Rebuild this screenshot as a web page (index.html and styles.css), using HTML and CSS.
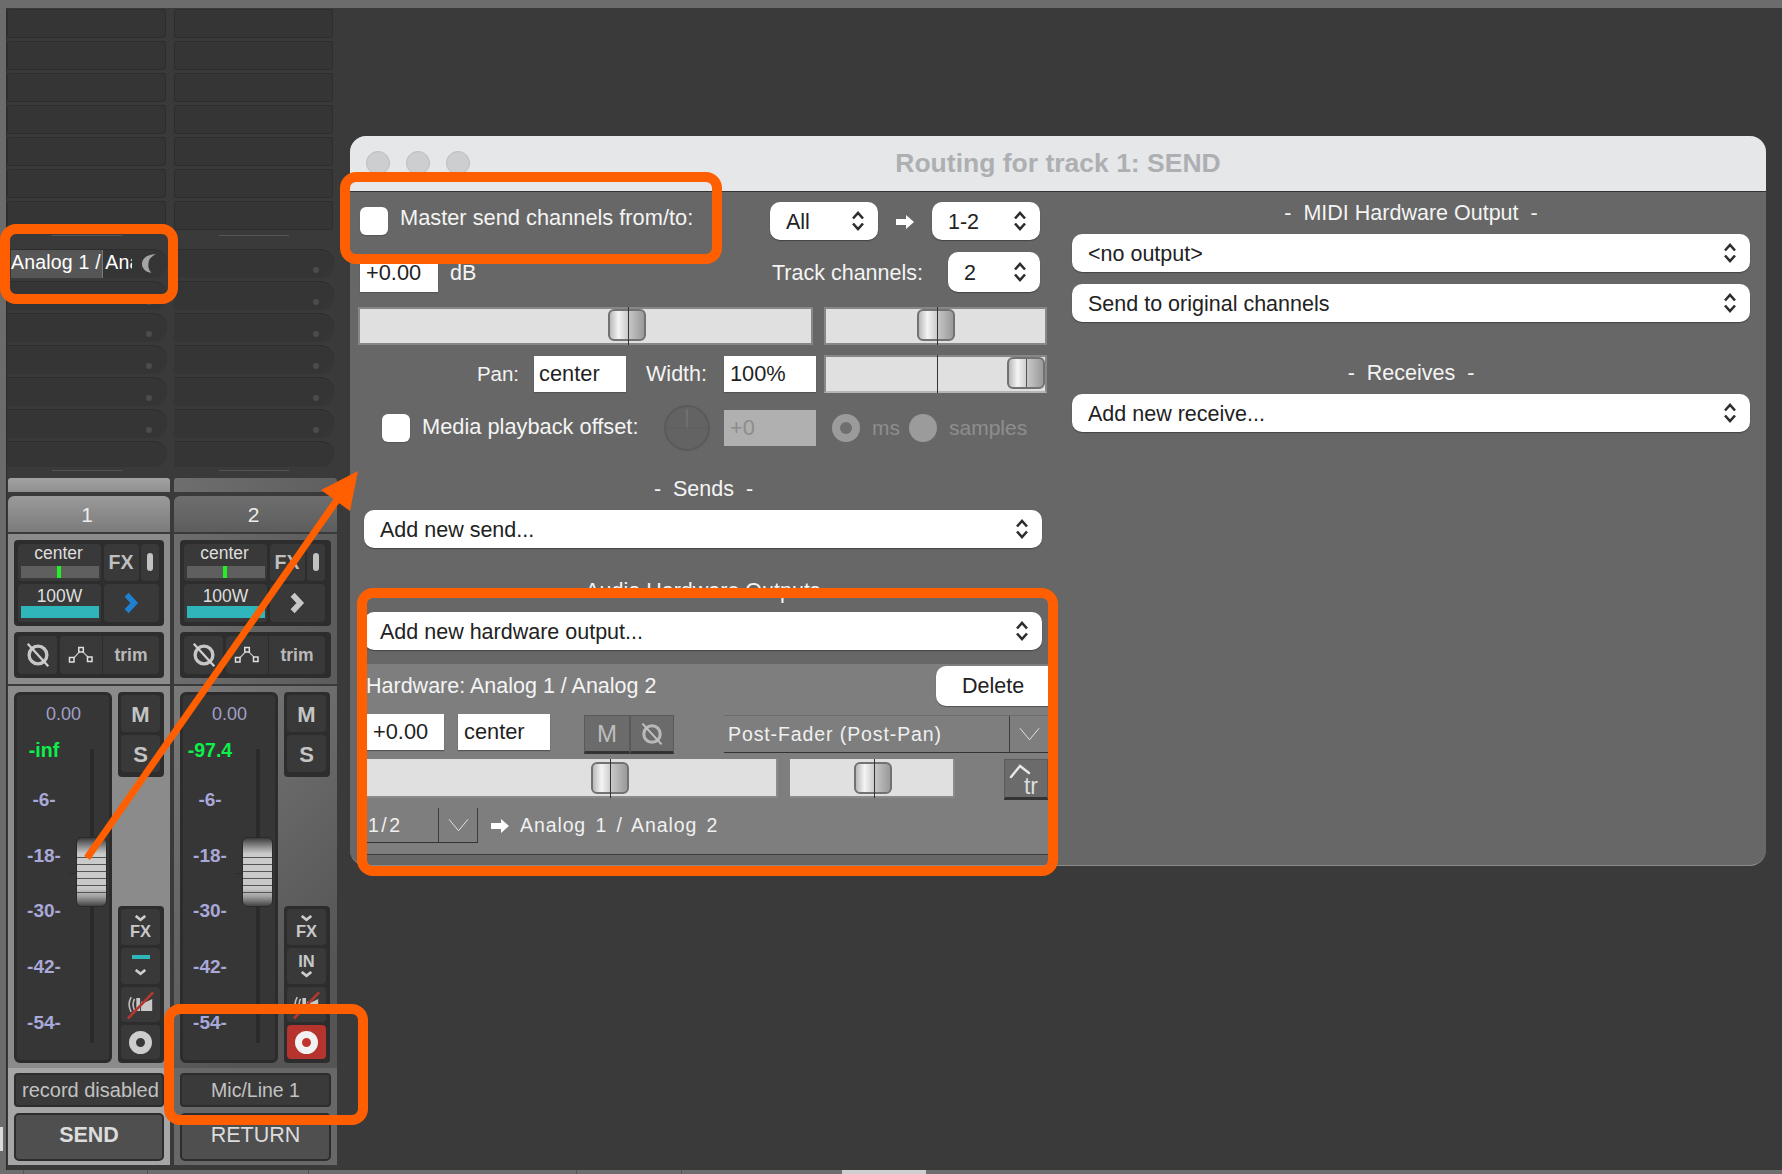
FILE: index.html
```html
<!DOCTYPE html>
<html lang="en">
<head>
<meta charset="utf-8">
<title>Routing for track 1: SEND</title>
<link rel="stylesheet" href="styles.css">
</head>
<body>
<svg class="defs" width="0" height="0">
  <symbol id="updown" viewBox="0 0 14 22"><path d="M2 8.500 7 3l5 5.500M2 13.500 7 19l5-5.500" fill="none" stroke="#2d2d2d" stroke-width="2.600"/></symbol>
  <symbol id="phase" viewBox="0 0 30 30"><circle cx="15" cy="15" r="9.500" fill="none" stroke="#c6c6c6" stroke-width="3.600"/><path d="M4 3 26 27" stroke="#d0d0d0" stroke-width="2.400"/></symbol>
  <symbol id="env" viewBox="0 0 26 20"><path d="M4 15 13 5l9 9" fill="none" stroke="#c4c4c4" stroke-width="1.200"/><path d="M1.500 12.500h4.500v4.500H1.500zM10.800 2.500h4.500V7h-4.500zM19.500 12h4.500v4.500h-4.500z" fill="#383838" stroke="#e0e0e0" stroke-width="1.500"/></symbol>
  <symbol id="chev" viewBox="0 0 14 20"><path d="M3 2.500 10 10l-7 7.500" fill="none" stroke="currentColor" stroke-width="5"/></symbol>
  <symbol id="down" viewBox="0 0 14 8"><path d="M1.500 1 7 5.500 12.500 1" fill="none" stroke="#ccc" stroke-width="3"/></symbol>
  <symbol id="speaker" viewBox="0 0 30 34"><path d="M10 10h4v14h-4zM15 14h6l6-3v13h-12z" fill="#c8c8c8"/><path d="M8 11q-3 6 0 12M4.500 9q-4.500 8 0 16" fill="none" stroke="#c0c0c0" stroke-width="1.700"/><path d="M1 32 28 4" stroke="#b3392f" stroke-width="2.800"/></symbol>
  <symbol id="arrowr" viewBox="0 0 18 14"><path d="M0 4h10V0l8 7-8 7v-4H0z" fill="#fff"/></symbol>
  <symbol id="vee" viewBox="0 0 22 14"><path d="M1 1l10 12L21 1" fill="none" stroke="#e6e6e6" stroke-width="1"/></symbol>
</svg>

<div class="screen">
  <div class="topbar"></div>
  <div class="main">
    <div class="edge"><div class="edge-tab"></div></div>

    <section class="track">
      <div class="clips">
        <div class="clip"></div><div class="clip"></div><div class="clip"></div><div class="clip"></div><div class="clip"></div><div class="clip"></div><div class="clip"></div>
        <div class="clip-sep"></div>
        <div class="slot slot-name">
          <span class="slot-label">Analog 1 / Analog 2</span>
          <svg class="crescent" viewBox="0 0 14 18"><path d="M13 1C4 1 0 6 1 11c1 4 5 6 8 6-2-2-3-5-2.500-8C7 5 9 3 13 1z" fill="#a4a4a4"/></svg>
        </div>
        <div class="slot"><i class="dot"></i></div><div class="slot"><i class="dot"></i></div><div class="slot"><i class="dot"></i></div><div class="slot"><i class="dot"></i></div><div class="slot"><i class="dot"></i></div><div class="slot slot-last"></div>
        <div class="clip-sep clip-sep-end"></div>
      </div>
      <div class="strip strip-selected">
        <div class="strip-bar"></div>
        <div class="strip-head">1</div>
        <div class="strip-top">
          <div class="panel panel-a">
            <div class="cell cell-meter"><span class="small">center</span><div class="pan-meter"><i></i></div></div>
            <div class="cell cell-text fx-large">FX</div>
            <div class="cell cell-pill"><i></i></div>
            <div class="cell cell-meter"><span class="small small-low">100W</span><div class="width-meter"></div></div>
            <div class="cell cell-wide chev-blue"><svg class="chev"><use href="#chev"/></svg></div>
          </div>
          <div class="panel panel-b">
            <div class="cell cell-phase"><svg class="phase"><use href="#phase"/></svg></div>
            <div class="cell cell-env"><span class="env-box"><svg class="env"><use href="#env"/></svg></span><span class="trim">trim</span></div>
          </div>
        </div>
        <div class="strip-fader">
          <div class="fader-panel">
            <div class="vol">0.00</div>
            <div class="peak">-inf</div>
            <div class="scale"><span>-6-</span><span>-18-</span><span>-30-</span><span>-42-</span><span>-54-</span></div>
            <div class="rail"></div>
            <div class="fader-tick"></div>
            <div class="fader-cap"></div>
          </div>
          <div class="side">
            <div class="panel panel-ms"><div class="cell cell-text ms">M</div><div class="cell cell-text ms">S</div></div>
            <div class="panel panel-tools">
              <div class="cell cell-tool tool-fx"><svg class="down"><use href="#down"/></svg><b>FX</b></div>
              <div class="cell cell-tool tool-in"><i class="teal-dash"></i><svg class="down"><use href="#down"/></svg></div>
              <div class="cell cell-tool tool-sp"><svg class="speaker"><use href="#speaker"/></svg></div>
              <div class="cell cell-tool tool-rec"><i class="rec"></i></div>
            </div>
          </div>
        </div>
        <div class="strip-foot">
          <div class="input-label">record disabled</div>
          <div class="name-btn name-bold">SEND</div>
        </div>
      </div>
    </section>

    <section class="track">
      <div class="clips">
        <div class="clip"></div><div class="clip"></div><div class="clip"></div><div class="clip"></div><div class="clip"></div><div class="clip"></div><div class="clip"></div>
        <div class="clip-sep"></div>
        <div class="slot"><i class="dot"></i></div><div class="slot"><i class="dot"></i></div><div class="slot"><i class="dot"></i></div><div class="slot"><i class="dot"></i></div><div class="slot"><i class="dot"></i></div><div class="slot"><i class="dot"></i></div><div class="slot slot-last"></div>
        <div class="clip-sep clip-sep-end"></div>
      </div>
      <div class="strip strip-plain">
        <div class="strip-bar"></div>
        <div class="strip-head">2</div>
        <div class="strip-top">
          <div class="panel panel-a">
            <div class="cell cell-meter"><span class="small">center</span><div class="pan-meter"><i></i></div></div>
            <div class="cell cell-text fx-large">FX</div>
            <div class="cell cell-pill"><i></i></div>
            <div class="cell cell-meter"><span class="small small-low">100W</span><div class="width-meter"></div></div>
            <div class="cell cell-wide chev-grey"><svg class="chev"><use href="#chev"/></svg></div>
          </div>
          <div class="panel panel-b">
            <div class="cell cell-phase"><svg class="phase"><use href="#phase"/></svg></div>
            <div class="cell cell-env"><span class="env-box"><svg class="env"><use href="#env"/></svg></span><span class="trim">trim</span></div>
          </div>
        </div>
        <div class="strip-fader">
          <div class="fader-panel">
            <div class="vol">0.00</div>
            <div class="peak">-97.4</div>
            <div class="scale"><span>-6-</span><span>-18-</span><span>-30-</span><span>-42-</span><span>-54-</span></div>
            <div class="rail"></div>
            <div class="fader-tick"></div>
            <div class="fader-cap"></div>
          </div>
          <div class="side">
            <div class="panel panel-ms"><div class="cell cell-text ms">M</div><div class="cell cell-text ms">S</div></div>
            <div class="panel panel-tools">
              <div class="cell cell-tool tool-fx"><svg class="down"><use href="#down"/></svg><b>FX</b></div>
              <div class="cell cell-tool tool-in"><b>IN</b><svg class="down"><use href="#down"/></svg></div>
              <div class="cell cell-tool tool-sp"><svg class="speaker"><use href="#speaker"/></svg></div>
              <div class="cell cell-tool tool-rec tool-rec-on"><i class="rec"></i></div>
            </div>
          </div>
        </div>
        <div class="strip-foot">
          <div class="input-label">Mic/Line 1</div>
          <div class="name-btn">RETURN</div>
        </div>
      </div>
    </section>
  </div>
  <div class="bottombar">
    <span class="seg seg-1"></span><span class="seg seg-2"></span><span class="seg seg-3"></span><span class="seg seg-4"></span><span class="seg seg-5"></span><span class="seg seg-6"></span><span class="seg seg-7"></span>
  </div>
</div>

<div class="window">
  <header class="titlebar">
    <div class="lights"><i></i><i></i><i></i></div>
    <div class="title">Routing for track 1: SEND</div>
  </header>
  <div class="win-body">
    <div class="lcol">
      <div class="row row-1">
        <span class="check"></span>
        <span class="lbl lbl-master">Master send channels from/to:</span>
        <div class="sel sel-short"><span>All</span><svg class="updown"><use href="#updown"/></svg></div>
        <svg class="arrowr arrowr-1"><use href="#arrowr"/></svg>
        <div class="sel sel-short"><span>1-2</span><svg class="updown"><use href="#updown"/></svg></div>
      </div>
      <div class="row row-2">
        <div class="field field-db">+0.00</div>
        <span class="lbl lbl-db">dB</span>
        <span class="lbl lbl-track">Track channels:</span>
        <div class="sel sel-track"><span>2</span><svg class="updown"><use href="#updown"/></svg></div>
      </div>
      <div class="row row-3">
        <div class="slider slider-vol"><i class="tick"></i><i class="thumb"></i></div>
        <div class="slider slider-pan"><i class="tick"></i><i class="thumb"></i></div>
      </div>
      <div class="row row-4">
        <span class="lbl lbl-pan">Pan:</span>
        <div class="field field-pan">center</div>
        <span class="lbl lbl-width">Width:</span>
        <div class="field field-width">100%</div>
        <div class="slider slider-width"><i class="tick"></i><i class="thumb"></i></div>
      </div>
      <div class="row row-5">
        <span class="check"></span>
        <span class="lbl lbl-media">Media playback offset:</span>
        <svg class="knob" viewBox="0 0 46 46"><circle cx="23" cy="23" r="22" fill="#636363" stroke="#5a5a5a" stroke-width="2"/><path d="M23 4v19" stroke="#7d7d7d" stroke-width="1"/><path d="M2 23h42" stroke="#5e5e5e" stroke-width="1"/></svg>
        <div class="field field-off">+0</div>
        <span class="radio radio-on"></span>
        <span class="off-lbl off-ms">ms</span>
        <span class="radio radio-off"></span>
        <span class="off-lbl off-samples">samples</span>
      </div>
      <div class="section-title title-sends">-&nbsp; Sends &nbsp;-</div>
      <div class="sel sel-wide sel-send"><span>Add new send...</span><svg class="updown"><use href="#updown"/></svg></div>
      <div class="section-title title-audio">-&nbsp; Audio Hardware Outputs &nbsp;-</div>
      <div class="sel sel-wide sel-hw"><span>Add new hardware output...</span><svg class="updown"><use href="#updown"/></svg></div>
      <div class="hw-panel">
        <div class="hw-row hw-a">
          <span class="lbl hw-name">Hardware: Analog 1 / Analog 2</span>
          <button class="delete">Delete</button>
        </div>
        <div class="hw-row hw-b">
          <div class="field field-hw1">+0.00</div>
          <div class="field field-hw2">center</div>
          <div class="tbtn tbtn-m">M</div>
          <div class="tbtn tbtn-p"><svg class="phase-sm"><use href="#phase"/></svg></div>
          <div class="combo combo-mode"><span class="spaced">Post-Fader (Post-Pan)</span><span class="combo-end"><svg class="vee"><use href="#vee"/></svg></span></div>
        </div>
        <div class="hw-row hw-c">
          <div class="slider slider-hw1"><i class="tick"></i><i class="thumb"></i></div>
          <div class="slider slider-hw2"><i class="tick"></i><i class="thumb"></i></div>
          <div class="tbtn tbtn-tr"><svg class="tr-caret" viewBox="0 0 24 16"><path d="M3 14 12 3l9 7" fill="none" stroke="#e8e8e8" stroke-width="2.400" stroke-linecap="round"/></svg><span class="tr-text">tr</span></div>
        </div>
        <div class="hw-row hw-d">
          <div class="combo combo-ch"><span class="spaced spaced-ch">1/2</span><span class="combo-end"><svg class="vee"><use href="#vee"/></svg></span></div>
          <svg class="arrowr arrowr-2"><use href="#arrowr"/></svg>
          <span class="spaced hw-dest">Analog 1 / Analog 2</span>
        </div>
      </div>
    </div>
    <div class="rcol">
      <div class="section-title title-midi">-&nbsp; MIDI Hardware Output &nbsp;-</div>
      <div class="sel sel-wide sel-r1"><span>&lt;no output&gt;</span><svg class="updown"><use href="#updown"/></svg></div>
      <div class="sel sel-wide sel-r2"><span>Send to original channels</span><svg class="updown"><use href="#updown"/></svg></div>
      <div class="section-title title-recv">-&nbsp; Receives &nbsp;-</div>
      <div class="sel sel-wide sel-r1"><span>Add new receive...</span><svg class="updown"><use href="#updown"/></svg></div>
    </div>
  </div>
</div>

<div class="mark mark-slot"></div>
<div class="mark mark-master"></div>
<div class="mark mark-hw"></div>
<div class="mark mark-input"></div>
<svg class="arrow" viewBox="0 0 1782 1174"><path d="M87 858 337 500" stroke="#ff5f00" stroke-width="7" fill="none"/><path d="M358 471 321 490 350 511z" fill="#ff5f00"/></svg>
</body>
</html>
```

FILE: styles.css
```css
* { box-sizing: border-box; }
html, body { margin: 0; padding: 0; }
body {
  width: 1782px;
  height: 1174px;
  position: relative;
  overflow: hidden;
  background: #363636;
  font-family: "Liberation Sans", Arial, sans-serif;
  color: #f2f2f2;
}
.defs { position: absolute; }
i { display: block; font-style: normal; }

/* desktop frame */
.screen { display: flex; flex-direction: column; height: 1174px; }
.topbar { height: 8px; background: #6c6c6c; flex: none; }
.main { display: flex; height: 1162px; flex: none; background: #3a3a3a; }
.edge { width: 7px; background: linear-gradient(90deg, #6b6b6b 6px, #2c2c2c 6px); flex: none; padding-top: 1119px; }
.edge-tab { width: 3px; height: 24px; background: #dcdcdc; }
.bottombar { height: 4px; flex: none; background: #6e6e6e; display: flex; }
.seg { display: block; height: 4px; border-right: 1px solid #555; }
.seg-1 { width: 24px; }
.seg-2 { width: 124px; }
.seg-3 { width: 161px; }
.seg-4 { width: 268px; }
.seg-5 { width: 105px; }
.seg-6 { width: 160px; background: #6e6e6e; border-right: 0; }
.seg-7 { width: 84px; background: #cfcfcf; border-right: 0; }

/* track columns */
.track { width: 167px; flex: none; display: flex; flex-direction: column; }
.clips { height: 470px; overflow: hidden; padding-top: 1px; width: 160px; }
.clip {
  height: 29px; margin-bottom: 3px; width: 159px;
  background: #353535; border: 1px solid #2d2d2d; border-radius: 2px;
}
.clip-sep { height: 1px; width: 70px; margin: 5px 0 0 45px; background: #555; }
.clip-sep + .slot { margin-top: 13px; }
.clip-sep-end { margin-top: 3px; }
.slot {
  height: 29px; margin-bottom: 3px; width: 160px;
  background: #353535; border-radius: 0 14px 14px 0;
  border-top: 1px solid #2d2d2d;
  display: flex; justify-content: flex-end; align-items: flex-end;
  padding: 0 15px 5px 0;
}
.slot-last { height: 26px; margin-bottom: 0; }
.slot-name { position: relative; padding: 0; align-items: flex-start; justify-content: flex-start; }
.slot-label {
  margin-left: 4px; width: 121px; height: 28px; overflow: hidden; white-space: nowrap;
  font-size: 19.500px; line-height: 25px; letter-spacing: .2px; color: #fff;
  background: linear-gradient(90deg, #565656 91px, #777 91px, #777 92px, transparent 92px);
}
.crescent { width: 16px; height: 21px; margin: 3px 0 0 9px; }
.dot { width: 6px; height: 6px; border-radius: 50%; background: #4c4c4c; }

.strip { display: flex; flex-direction: column; height: 687px; margin-right: 4px; }
.track:first-of-type .strip { margin-left: 1px; }
.strip-bar { height: 14px; margin-bottom: 4px; border-radius: 3px 3px 0 0; }
.strip-head {
  height: 36px; border-radius: 6px 6px 0 0; margin-bottom: 2px; padding-right: 4px;
  text-align: center; font-size: 21px; line-height: 37px; color: #ececec;
}
.strip-selected .strip-bar { background: linear-gradient(180deg, #a2a2a2, #909090); }
.strip-selected .strip-head { background: linear-gradient(180deg, #9a9a9a, #7b7b7b); }
.strip-plain .strip-bar { background: linear-gradient(90deg, #6e6e6e, #5f5f5f); }
.strip-plain .strip-head { background: linear-gradient(180deg, #6e6e6e, #5d5d5d); }
.strip-top { height: 150px; padding: 6px; display: flex; flex-direction: column; gap: 6px; margin-bottom: 2px; }
.strip-selected .strip-top, .strip-selected .strip-fader { background: #8b8b8b; }
.strip-plain .strip-top { background: linear-gradient(90deg, #6d6d6d, #5c5c5c); }
.strip-plain .strip-fader { background: linear-gradient(135deg, #7a7a7a, #555 80%); }

.panel { background: #2d2d2d; border-radius: 4px; }
.cell { background: #393939; border-radius: 4px; }
.panel-a {
  height: 86px; padding: 4px 5px 4px 4px;
  display: grid; grid-template-columns: 83px 35px 18px; grid-template-rows: 37px 38px;
  column-gap: 2.500px; row-gap: 3px;
}
.cell-meter { display: flex; flex-direction: column; align-items: center; }
.small { font-size: 17.500px; line-height: 18px; color: #dedede; height: 22px; margin-right: 2px; }
.small-low { line-height: 24px; margin-right: 0; }
.pan-meter { width: 78px; height: 12px; background: #5f5f5f; position: relative; display: flex; justify-content: center; }
.pan-meter i { width: 4px; height: 12px; background: #22f022; margin-right: 1px; }
.width-meter { width: 78px; height: 12px; background: #2fb6bb; }
.cell-text { display: flex; align-items: center; justify-content: center; font-weight: 700; color: #bfbfbf; }
.fx-large { font-size: 19.500px; }
.cell-pill { display: flex; justify-content: center; padding-top: 9px; }
.cell-pill i { width: 6px; height: 18px; border-radius: 3px; background: #c2c2c2; }
.cell-wide { grid-column: span 2; display: flex; align-items: center; justify-content: center; }
.chev { width: 16px; height: 22px; }
.chev-blue { color: #2080d0; }
.chev-grey { color: #c8c8c8; }
.panel-b { height: 46px; padding: 4px 5px 4px 4px; display: flex; gap: 3px; }
.cell-phase { width: 39px; display: flex; align-items: center; justify-content: center; }
.phase { width: 28px; height: 28px; }
.cell-env { width: 99px; display: flex; align-items: center; }
.env-box { width: 43px; height: 100%; display: flex; align-items: center; justify-content: center; border-right: 1px solid #2d2d2d; }
.env { width: 26px; height: 20px; }
.trim { flex: 1; text-align: center; font-weight: 700; font-size: 17.500px; color: #b9b9b9; }

.strip-fader { height: 382px; padding: 6px 6px 0; display: flex; gap: 6px; }
.fader-panel {
  width: 98px; height: 371px; position: relative;
  background: #363636; border: 3px solid #2c2c2c; border-radius: 6px;
}
.vol { padding-top: 8px; text-align: center; font-size: 18px; line-height: 22px; color: #a0a0c6; margin-left: 1px; }
.peak { margin: 13px 0 0 -3px; width: 60px; text-align: center; font-weight: 700; font-size: 19.500px; line-height: 24px; color: #0cf04a; }
.scale { margin-top: 27px; width: 60px; margin-left: -3px; display: flex; flex-direction: column; gap: 33.700px; text-align: center; }
.scale span { font-weight: 700; font-size: 19px; line-height: 22px; color: #a9a9d9; }
.rail { position: absolute; left: 73px; top: 54px; width: 4px; height: 294px; background: #2a2a2a; }
.fader-tick { position: absolute; left: 52px; top: 178px; width: 40px; height: 1px; background: #2c2c2c; }
.fader-cap {
  position: absolute; left: 59px; top: 142px; width: 31px; height: 70px;
  border: 1px solid #2a2a2a; border-radius: 6px;
  background:
    repeating-linear-gradient(180deg, transparent 0, transparent 6px, #555 6px, #555 7px) 0 13px / 100% 43px no-repeat,
    linear-gradient(180deg, #3c3c3c 0, #9a9a9a 10px, #cbcbcb 16px, #c8c8c8 50px, #a4a4a4 58px, #444 100%);
}
.side { width: 46px; display: flex; flex-direction: column; justify-content: space-between; height: 371px; }
.panel-ms { height: 85px; padding: 3px 4px 4px 3px; display: flex; flex-direction: column; gap: 3px; }
.ms { height: 37px; font-size: 22px; color: #c4c4c4; padding-top: 2px; }
.panel-tools { height: 157px; padding: 3px 4px 4px 3px; display: flex; flex-direction: column; gap: 3px; }
.cell-tool { height: 36px; display: flex; flex-direction: column; align-items: center; justify-content: center; }
.cell-tool b { font-size: 16.500px; line-height: 15px; color: #c8c8c8; }
.down { width: 13px; height: 7px; }
.tool-fx .down { margin-bottom: 2px; }
.tool-in .down { margin-top: 2px; }
.teal-dash { width: 18px; height: 4px; background: #2fb6bb; margin-bottom: 8px; }
.speaker { width: 28px; height: 33px; }
.tool-rec { height: 34px; }
.rec { width: 23px; height: 23px; border-radius: 50%; background: #393939; border: 7px solid #cdcdcd; }
.tool-rec-on { background: #b5352e; }
.tool-rec-on .rec { background: #c0352e; border-color: #f2f2f2; }

.strip-foot { height: 97px; padding: 5px 6px 4px; display: flex; flex-direction: column; gap: 6px; }
.strip-selected .strip-foot { background: #a6a6a6; }
.strip-plain .strip-foot { background: #686868; }
.input-label {
  height: 34px; background: #3a3a3a; border: 2px solid #2d2d2d; border-radius: 4px;
  font-size: 19.500px; line-height: 30px; text-align: center; color: #c2c2c2;
  overflow: hidden; white-space: nowrap; padding: 0 4px;
}
.strip-selected .input-label { text-align: left; padding-left: 6px; font-size: 20px; }
.name-btn {
  height: 48px; background: #4f4f4f; border: 2px solid #2d2d2d; border-radius: 5px;
  font-size: 21.500px; line-height: 40px; text-align: center; color: #dcdcdc;
}
.name-bold { font-weight: 700; }

/* routing window */
.window {
  position: absolute; left: 350px; top: 136px; width: 1416px; height: 730px;
  background: #676767; border-radius: 16px; overflow: hidden;
  border-bottom: 1px solid #8a8a8a;
}
.titlebar {
  height: 56px; background: #e6e7e9; border-bottom: 1px solid #333;
  position: relative; display: flex; align-items: center; justify-content: center;
}
.lights { position: absolute; left: 16px; top: 15px; display: flex; gap: 16px; }
.lights i { width: 24px; height: 24px; border-radius: 50%; background: #cdcecf; border: 1px solid #bdbebf; }
.title { font-weight: 700; font-size: 26.500px; color: #adafb2; }
.win-body { display: flex; }
.lcol { width: 706px; padding-left: 10px; flex: none; }
.rcol { width: 678px; margin-left: 16px; flex: none; }

.lbl { font-size: 21.500px; color: #f4f4f4; white-space: nowrap; }
.row { display: flex; align-items: center; }
.row-1 { height: 38px; margin-top: 10px; width: 680px; }
.check { width: 28px; height: 28px; border-radius: 6px; background: #fff; flex: none; box-shadow: 0 1px 1px #555; }
.lbl-master { margin-left: 12px; flex: 1; padding-bottom: 6px; font-size: 21.800px; }
.sel {
  background: #fff; border-radius: 10px; box-shadow: 0 1px 1px #444; color: #222;
  font-size: 21.500px; display: flex; align-items: center; justify-content: space-between;
  padding: 0 13px 0 16px; height: 38px; flex: none;
}
.sel span { padding-top: 2px; }
.updown { width: 14px; height: 22px; flex: none; }
.sel-short { width: 108px; }
.arrowr { width: 18px; height: 14px; flex: none; }
.arrowr-1 { margin: 2px 18px 0 18px; }
.row-2 { height: 40px; margin-top: 12px; width: 680px; }
.field { background: #fff; color: #1f1f1f; font-size: 21.800px; padding-left: 6px; display: flex; align-items: center; box-shadow: 0 1px 1px #555; flex: none; }
.field-db { width: 78px; height: 38px; align-self: flex-end; }
.lbl-db { margin-left: 12px; flex: 1; padding-top: 2px; }
.lbl-track { margin-right: 25px; padding-top: 2px; }
.sel-track { width: 92px; height: 40px; }
.row-3 { height: 38px; margin: 15px 0 0 -2px; gap: 11px; }
.slider { position: relative; background: #e0e0e0; border: 2px solid #878787; flex: none; height: 38px; }
.tick { position: absolute; top: -2px; bottom: -2px; width: 1px; background: #333; z-index: 2; }
.thumb {
  position: absolute; top: 0; width: 38px; height: 32px; border: 2px solid #727272; border-radius: 6px;
  background: linear-gradient(90deg, #b9b9b9 0, #f4f4f4 25%, #cfcfcf 50%, #c6c6c6 55%, #9a9a9a 100%);
  z-index: 1;
}
.slider-vol { width: 455px; }
.slider-vol .tick { left: 268px; }
.slider-vol .thumb { left: 248px; }
.slider-pan { width: 223px; }
.slider-pan .tick { left: 111px; }
.slider-pan .thumb { left: 91px; }
.row-4 { height: 38px; margin: 10px 0 0 -2px; width: 689px; justify-content: flex-end; }
.lbl-pan { font-size: 20.500px; }
.field-pan { width: 92px; height: 36px; margin-left: 15px; padding-left: 5px; }
.lbl-width { margin-left: 20px; }
.field-width { width: 92px; height: 36px; margin-left: 17px; }
.slider-width { width: 223px; margin-left: 8px; border-bottom-color: #b5b5b5; }
.slider-width .tick { left: 111px; }
.slider-width .thumb { left: 181px; }
.slider-width .thumb::after { content: ""; display: block; width: 1px; height: 28px; margin-left: 17px; background: #555; }
.row-5 { height: 36px; margin-top: 17px; padding-left: 22px; }
.lbl-media { margin-left: 12px; width: 217px; padding-bottom: 2px; font-size: 21.800px; }
.knob { width: 46px; height: 46px; margin: 0 0 0 25px; flex: none; }
.field-off { width: 92px; height: 36px; margin-left: 14px; background: #b0b0b0; color: #8d8d8d; box-shadow: none; }
.radio { width: 28px; height: 28px; border-radius: 50%; background: #9b9b9b; flex: none; display: flex; align-items: center; justify-content: center; }
.radio-on { margin-left: 16px; }
.radio-on::after { content: ""; width: 12px; height: 12px; border-radius: 50%; background: #6f6f6f; }
.radio-off { margin-left: 9px; }
.off-lbl { font-size: 21px; color: #8e8e8e; margin-left: 12px; }
.section-title { font-size: 21.500px; line-height: 22px; text-align: center; color: #f4f4f4; white-space: nowrap; }
.title-sends { margin-top: 32px; width: 687px; }
.sel-wide { width: 678px; }
.sel-send { margin: 10px 0 0 4px; }
.title-audio { margin-top: 32px; width: 687px; }
.sel-hw { margin: 10px 0 0 4px; }

.hw-panel {
  margin-top: 14px; width: 690px; height: 191px; background: #7e7e7e; display: flow-root;
  border-bottom: 1px solid #3d3d3d; padding-right: 2px;
}
.hw-row { display: flex; align-items: center; }
.hw-a { height: 40px; margin-top: 2px; justify-content: space-between; }
.hw-name { margin-left: 6px; }
.delete {
  width: 114px; height: 40px; margin-right: -2px; border: 0; border-radius: 10px 0 0 10px;
  background: #fff; color: #222; font: 21.500px "Liberation Sans", Arial, sans-serif; padding: 0 0 0 26px; text-align: left;
  box-shadow: 0 1px 1px #555;
}
.hw-b { height: 40px; margin-top: 8px; align-items: flex-start; }
.field-hw1 { width: 84px; height: 36px; padding-left: 13px; }
.field-hw2 { width: 92px; height: 36px; margin-left: 14px; }
.tbtn { background: #6b6b6b; border: 1px solid #5a5a5a; border-bottom: 3px solid #333; display: flex; align-items: center; justify-content: center; flex: none; position: relative; }
.tbtn-m { width: 46px; height: 39px; margin: 1px 0 0 34px; font-size: 24px; color: #bdbdbd; }
.tbtn-p { width: 44px; height: 39px; margin-top: 1px; }
.phase-sm { width: 26px; height: 28px; opacity: .85; }
.combo { display: flex; align-items: center; border-bottom: 1px solid #333; flex: none; }
.combo-mode { width: 324px; height: 38px; margin: 1px 0 0 50px; border-top: 1px solid #6c6c6c; padding-left: 4px; justify-content: space-between; }
.combo-end { display: flex; align-items: center; justify-content: center; border-left: 1px solid #3c3c3c; height: 100%; width: 39px; }
.vee { width: 21px; height: 14px; }
.spaced { font-size: 19.500px; letter-spacing: .9px; color: #f0f0f0; white-space: nowrap; }
.spaced-ch { letter-spacing: 2.500px; }
.hw-c { height: 41px; margin-top: 5px; align-items: flex-start; }
.slider-hw1 { width: 418px; height: 39px; border-left: 0; border-top: 0; border-right: 2px solid #8b8b8b; border-bottom: 2px solid #8b8b8b; }
.slider-hw1 .tick { left: 250px; top: 0; }
.slider-hw1 .thumb { left: 231px; top: 3px; }
.slider-hw2 { width: 165px; height: 39px; margin-left: 12px; border-left: 0; border-top: 0; border-right: 2px solid #8b8b8b; border-bottom: 2px solid #8b8b8b; }
.slider-hw2 .tick { left: 84px; top: 0; }
.slider-hw2 .thumb { left: 64px; top: 3px; }
.tbtn-tr { width: 44px; height: 41px; margin-left: 49px; }
.tr-caret { position: absolute; left: 3px; top: 3px; width: 24px; height: 16px; }
.tr-text { position: absolute; right: 9px; bottom: -1px; font-size: 23px; line-height: 24px; color: #dcdcdc; }
.hw-d { height: 35px; margin-top: 8px; }
.combo-ch { width: 118px; height: 35px; padding-left: 8px; justify-content: space-between; border-right: 1px solid #3c3c3c; }
.arrowr-2 { margin-left: 13px; }
.hw-dest { margin-left: 11px; word-spacing: 3px; }

.title-midi { margin-top: 10px; }
.sel-r1 { margin-top: 10px; }
.sel-r2 { margin-top: 12px; }
.title-recv { margin-top: 40px; }

/* annotations */
.mark { position: absolute; border: 10px solid #ff5f00; border-radius: 16px; }
.mark-slot { left: 0; top: 224px; width: 178px; height: 80px; }
.mark-master { left: 340px; top: 172px; width: 382px; height: 92px; }
.mark-hw { left: 357px; top: 588px; width: 701px; height: 288px; }
.mark-input { left: 164px; top: 1004px; width: 204px; height: 121px; }
.arrow { position: absolute; left: 0; top: 0; width: 1782px; height: 1174px; pointer-events: none; }
```
